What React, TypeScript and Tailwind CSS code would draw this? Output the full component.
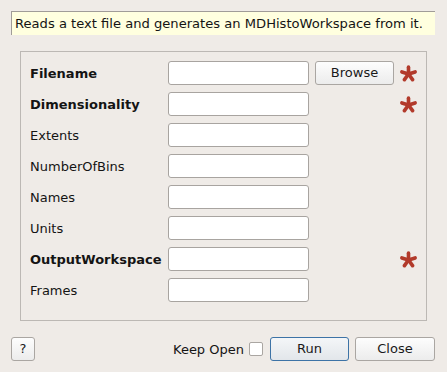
import React from "react";

const Star = () => (
  <svg width="17" height="17" viewBox="0 0 16 16" className="block">
    <g stroke="#b23a2b" strokeWidth="3.4" strokeLinecap="round">
      <line x1="8" y1="8.5" x2="8" y2="2" />
      <line x1="8" y1="8.5" x2="14.2" y2="6.5" />
      <line x1="8" y1="8.5" x2="1.8" y2="6.5" />
      <line x1="8" y1="8.5" x2="11.8" y2="13.8" />
      <line x1="8" y1="8.5" x2="4.2" y2="13.8" />
    </g>
  </svg>
);

const rows: { label: string; bold?: boolean; browse?: boolean; star?: boolean }[] = [
  { label: "Filename", bold: true, browse: true, star: true },
  { label: "Dimensionality", bold: true, star: true },
  { label: "Extents" },
  { label: "NumberOfBins" },
  { label: "Names" },
  { label: "Units" },
  { label: "OutputWorkspace", bold: true, star: true },
  { label: "Frames" },
];

const btn =
  "h-[24px] rounded-[3px] border border-[#aaa6a2] bg-gradient-to-b from-[#fdfdfd] to-[#ececec] text-[13px] text-[#1a1a1a] flex items-center justify-center";

export default function App() {
  return (
    <div
      className="w-[447px] h-[372px] bg-[#efebe7] overflow-hidden text-[13px] text-[#141414]"
      style={{ fontFamily: '"DejaVu Sans", sans-serif' }}
    >
      <div className="pt-[11px] pl-[11px]">
        <div className="w-[424px] h-[24px] bg-[#ffffdf] border-l border-t border-[#a09c98] flex items-center pl-[3px] pt-[1px] text-[13.1px]">
          Reads a text file and generates an MDHistoWorkspace from it.
        </div>
      </div>
      <div className="ml-[20px] mt-[16px] w-[407px] h-[270px] border border-[#bcb8b4] pt-[9px] pl-[9px] flex flex-col gap-[7px]">
        {rows.map((r) => (
          <div key={r.label} className="flex items-center h-[24px]">
            <div className={`w-[138px] pt-[1px] ${r.bold ? "font-bold" : ""}`}>{r.label}</div>
            <div className="w-[141px] h-[24px] bg-white border border-[#a8a4a0] rounded-[3px]" />
            <div className="w-[79px] ml-[6px]">
              {r.browse && <div className={`${btn} w-[79px]`}>Browse</div>}
            </div>
            <div className="ml-[6px]">{r.star && <Star />}</div>
          </div>
        ))}
      </div>
      <div className="flex items-center mt-[16px] pl-[11px]">
        <div className={`${btn} w-[24px]`}>?</div>
        <div className="ml-[138px] pt-[1px]">Keep Open</div>
        <div className="ml-[5px] w-[14px] h-[14px] bg-white border border-[#aaa6a2] rounded-[2px]" />
        <div className={`${btn} ml-[7px] w-[79px] !border-[#3d73a6] !from-[#f4f6f8] !to-[#e2e6ea]`}>Run</div>
        <div className={`${btn} ml-[6px] w-[80px]`}>Close</div>
      </div>
    </div>
  );
}
